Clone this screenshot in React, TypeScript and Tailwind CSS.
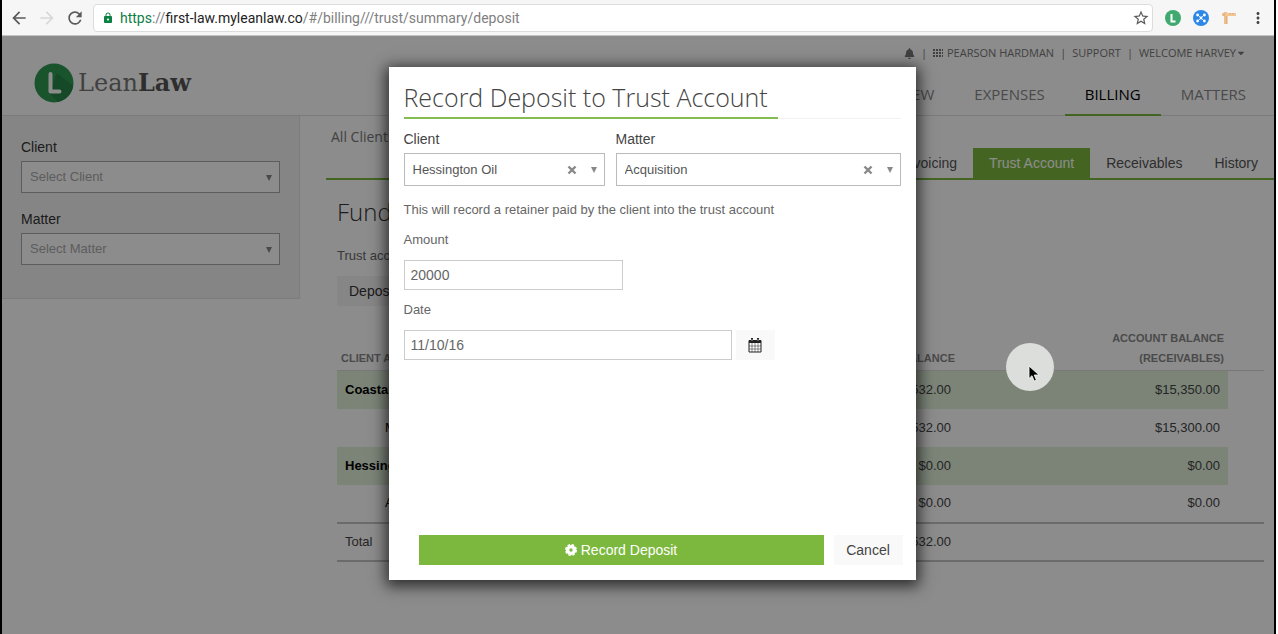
import { useState } from "react";
import { MdArrowBack, MdArrowForward, MdLock, MdMoreVert, MdRefresh, MdStarBorder } from "react-icons/md";
import { FaBell, FaCaretDown } from "react-icons/fa";

const sans = "font-['Liberation_Sans',Arial,sans-serif]";
const open = "font-['Open_Sans',sans-serif]";

const rows = [
  { name: "Coastal", balance: "$4,532.00", receivable: "$15,350.00", group: true },
  { name: "Merger", balance: "$4,532.00", receivable: "$15,300.00", group: false },
  { name: "Hessington Oil", balance: "$0.00", receivable: "$0.00", group: true },
  { name: "Acquisition", balance: "$0.00", receivable: "$0.00", group: false },
];

function BrowserBar() {
  return (
    <div className="flex h-9 items-center border-b border-[#c4c4c4] bg-[#f6f6f6] px-[7px] text-[#5a5a5a]">
      <button aria-label="Back" className="mr-2"><MdArrowBack size={20} /></button>
      <button aria-label="Forward" className="mr-2 text-[#d8d8d8]"><MdArrowForward size={20} /></button>
      <button aria-label="Reload" className="mr-2"><MdRefresh size={20} /></button>
      <div className="flex h-7 flex-1 items-center rounded-sm border border-[#dcdcdc] bg-white pr-0.5 pl-2 font-[Roboto,sans-serif] text-sm">
        <MdLock size={12} className="mr-1.5 text-[#0b8043]" />
        <span role="textbox" aria-label="Address" className="flex-1 text-[#808080]">
          <span className="text-[#0b8043]">https</span>://<span className="text-[#222]">first-law.myleanlaw.co</span>/#/billing///trust/summary/deposit
        </span>
        <button aria-label="Bookmark"><MdStarBorder size={18} /></button>
      </div>
      <div className="ml-3 flex items-center gap-3">
        <svg width="16" height="16" viewBox="0 0 16 16">
          <circle cx="8" cy="8" r="8" fill="#3fa96f" />
          <path d="M6.5 4v7.5h4" fill="none" stroke="#fff" strokeWidth="2" />
        </svg>
        <svg width="16" height="16" viewBox="0 0 16 16">
          <circle cx="8" cy="8" r="8" fill="#2b87e8" />
          <path d="M4 4l8 8M12 4l-8 8" stroke="#fff" strokeWidth="0.8" />
          <circle cx="8" cy="8" r="1.4" fill="#fff" />
          <circle cx="4.6" cy="5" r="1.4" fill="#fff" />
          <circle cx="11.4" cy="5" r="1.4" fill="#fff" />
          <circle cx="4.6" cy="11" r="1.4" fill="#fff" />
          <circle cx="11.4" cy="11" r="1.4" fill="#fff" />
        </svg>
        <svg width="16" height="16" viewBox="0 0 16 16">
          <path d="M3 2h3v12H3z" fill="#efbd8b" />
          <path d="M1 3h14v3H1z" fill="#f3c696" />
          <path d="M6 6v8M9 3v1.500M12 3v1.500M3 3v3" stroke="#d39a62" strokeWidth="0.8" />
        </svg>
        <button aria-label="Menu" className="text-[#444]"><MdMoreVert size={18} /></button>
      </div>
    </div>
  );
}

function Logo() {
  return (
    <a href="#home" className="flex items-center gap-1 pt-3.5 pl-8">
      <svg width="40" height="40" viewBox="0 0 40 40">
        <circle cx="20" cy="20" r="19.5" fill="#2e9a52" />
        <path d="M23 10l16 13a19.500 19.500 0 0 1-15 16l-9-9z" fill="#278647" />
        <path d="M16.500 11v17.500h9" fill="none" stroke="#fff" strokeWidth="4" strokeLinecap="round" strokeLinejoin="round" />
      </svg>
      <span className="font-['DejaVu_Serif',serif] text-2xl text-[#777]">
        Lean<span className="font-bold text-[#555]">Law</span>
      </span>
    </a>
  );
}

function Header() {
  return (
    <header className={`flex h-20 justify-between border-b border-[#e0e0e0] ${open}`}>
      <Logo />
      <div className="flex flex-col items-end justify-between pr-2">
        <div className="flex items-center gap-1.5 pt-[9px] pr-5 text-[11px] leading-4 text-[#777]">
          <FaBell size={11} />
          <span>|</span>
          <a href="#firm" className="flex items-center gap-1">
            <svg width="10" height="8" viewBox="0 0 10 8" fill="currentColor">
              <path d="M0 0h2v2H0zM3 0h2v2H3zM6 0h2v2H6zM9 0h1v2H9zM0 3h2v2H0zM3 3h2v2H3zM6 3h2v2H6zM9 3h1v2H9zM0 6h2v2H0zM3 6h2v2H3zM6 6h2v2H6zM9 6h1v2H9z" />
            </svg>
            PEARSON HARDMAN
          </a>
          <span>|</span>
          <a href="#support">SUPPORT</a>
          <span>|</span>
          <a href="#account" className="flex items-center">WELCOME HARVEY <FaCaretDown size={10} /></a>
        </div>
        <nav className="-mb-px flex text-[15px] leading-5 text-[#888]">
          <a href="#review" className="px-5 pb-2.5">REVIEW</a>
          <a href="#expenses" className="px-5 pb-2.5">EXPENSES</a>
          <a href="#billing" className="border-b-2 border-[#7cb83e] px-5 pb-2.5 text-black">BILLING</a>
          <a href="#matters" className="px-5 pb-2.5">MATTERS</a>
        </nav>
      </div>
    </header>
  );
}

function FilterSelect({ id, label, hint }: { id: string; label: string; hint: string }) {
  return (
    <div className="mb-4">
      <label htmlFor={id} className="mb-1 block text-sm leading-5 text-[#333]">{label}</label>
      <div className="relative">
        <select id={id} className="h-8 w-full appearance-none border border-[#aaa] bg-white px-2 text-[13px] text-[#aaa]">
          <option>{hint}</option>
        </select>
        <Arrow />
      </div>
    </div>
  );
}

function Arrow() {
  return (
    <svg width="6" height="6" viewBox="0 0 6 6" className="pointer-events-none absolute top-3.5 right-2 text-[#888]">
      <path d="M0 0h6L3 6z" fill="currentColor" />
    </svg>
  );
}

function Summary() {
  return (
    <main className="min-w-0 flex-1">
      <div className="flex h-16 justify-between border-b-2 border-[#7cb83e] text-sm text-[#555]">
        <span className={`pt-[11px] pl-[5px] text-[#777] ${open}`}>All Clients</span>
        <nav className="flex items-end">
          <a href="#invoicing" className="px-4 py-[3px] leading-6">Invoicing</a>
          <a href="#trust" className="bg-[#7cb83e] px-4 py-[3px] leading-6 text-white">Trust Account</a>
          <a href="#receivables" className="px-4 py-[3px] leading-6">Receivables</a>
          <a href="#history" className="px-4 py-[3px] leading-6">History</a>
        </nav>
      </div>
      <div className="pr-2.5 pl-[11px]">
        <h1 className={`pt-4 text-2xl font-light text-[#333] ${open}`}>Funds</h1>
        <p className="mt-4 text-[13px] leading-6 text-[#666]">Trust account</p>
        <button className="mt-2 h-[30px] bg-[#f5f5f5] px-3 text-sm text-[#333]">Deposit</button>
        <table className="mt-[22px] w-full table-fixed text-[13px] text-[#444]">
          <colgroup>
            <col />
            <col className="w-40" />
            <col className="w-[269px]" />
            <col className="w-9" />
          </colgroup>
          <thead>
            <tr className="border-b border-[#ddd] align-bottom text-[11px] leading-5 text-[#888]">
              <th className="px-1 pb-0.5 text-left">CLIENT ACCOUNT</th>
              <th className="px-1 pb-0.5 text-right">BALANCE</th>
              <th className="px-1 pb-0.5 text-right">ACCOUNT BALANCE<br />(RECEIVABLES)</th>
              <th></th>
            </tr>
          </thead>
          <tbody>
            {rows.map((row) => (
              <tr key={row.name} className="h-[38px]">
                <td className={row.group ? "bg-[#e2f1db] px-2 font-bold text-black" : "pl-12 text-black"}>{row.name}</td>
                <td className={row.group ? "bg-[#e2f1db] px-2 text-right" : "px-2 text-right"}>{row.balance}</td>
                <td className={row.group ? "bg-[#e2f1db] px-2 text-right" : "px-2 text-right"}>{row.receivable}</td>
                <td></td>
              </tr>
            ))}
          </tbody>
          <tfoot>
            <tr className="h-[38px] border-y-2 border-[#c4c4c4]">
              <td className="px-2">Total</td>
              <td className="px-2 text-right">$4,532.00</td>
              <td></td>
              <td></td>
            </tr>
          </tfoot>
        </table>
      </div>
    </main>
  );
}

function ModalSelect({ id, label, value, className }: { id: string; label: string; value: string; className: string }) {
  return (
    <div className={className}>
      <label htmlFor={id} className="mb-1 block text-sm leading-5 text-[#444]">{label}</label>
      <div className="relative">
        <select id={id} className="h-[33px] w-full appearance-none border border-[#bbb] bg-white px-2 text-[13px] text-[#555]">
          <option>{value}</option>
        </select>
        <button type="button" aria-label={`Clear ${label}`} className="absolute top-3 right-7 text-[#888]">
          <svg width="10" height="10" viewBox="0 0 10 10">
            <path d="M1.500 1.500l7 7M8.500 1.500l-7 7" stroke="currentColor" strokeWidth="2.400" />
          </svg>
        </button>
        <Arrow />
      </div>
    </div>
  );
}

function DepositModal() {
  const [amount, setAmount] = useState("20000");
  const [date, setDate] = useState("11/10/16");

  return (
    <form role="dialog" aria-labelledby="deposit-title" className="flex min-h-[513px] w-[527px] flex-col bg-white px-[15px] pt-3 pb-[15px] text-[#555] shadow-[0_3px_14px_3px_rgba(0,0,0,0.7)]">
      <div className="flex border-b border-[#f2f2f2]">
        <h2 id="deposit-title" className={`-mb-px border-b-2 border-[#85bd55] pr-2.5 pb-0.5 text-[25px] leading-9 font-light text-[#444] ${open}`}>
          Record Deposit to Trust Account
        </h2>
      </div>
      <div className="mt-2.5 flex gap-[11px]">
        <ModalSelect id="client" label="Client" value="Hessington Oil" className="w-[201px]" />
        <ModalSelect id="matter" label="Matter" value="Acquisition" className="flex-1" />
      </div>
      <p className="mt-3.5 text-[13px] leading-5 text-[#666]">This will record a retainer paid by the client into the trust account</p>
      <label htmlFor="amount" className="mt-2.5 text-[13px] leading-5 text-[#666]">Amount</label>
      <input id="amount" value={amount} onChange={(e) => setAmount(e.target.value)} className="mt-2.5 h-[30px] w-[219px] border border-[#ccc] px-1.5 text-sm text-[#666]" />
      <label htmlFor="date" className="mt-2.5 text-[13px] leading-5 text-[#666]">Date</label>
      <div className="mt-2.5 flex gap-1">
        <input id="date" value={date} onChange={(e) => setDate(e.target.value)} className="h-[30px] w-[328px] border border-[#ccc] px-1.5 text-sm text-[#666]" />
        <button type="button" aria-label="Open calendar" className="flex w-[39px] items-center justify-center bg-[#f9f9f9] text-[#222]">
          <svg width="14" height="15" viewBox="0 0 14 15">
            <path d="M1 2.500h12V14H1z" fill="#fff" stroke="currentColor" />
            <path d="M1 2h12v3H1z" fill="currentColor" />
            <path d="M4 0v4M10 0v4" stroke="currentColor" strokeWidth="2" />
            <path d="M4 1v2M10 1v2" stroke="#fff" strokeWidth="0.600" />
            <path d="M4 5v9M7 5v9M10 5v9M1 8h12M1 11h12" stroke="currentColor" strokeWidth="0.500" />
          </svg>
        </button>
      </div>
      <div className="-mr-0.5 mt-auto flex gap-2.5 pl-[15px]">
        <button type="button" className="flex h-[30px] flex-1 items-center justify-center gap-1 bg-[#7cb83e] text-sm text-white">
          <svg width="12" height="12" viewBox="0 0 12 12">
            <circle cx="6" cy="6" r="3.400" fill="none" stroke="currentColor" strokeWidth="3.400" />
            <circle cx="6" cy="6" r="5.300" fill="none" stroke="currentColor" strokeWidth="1.400" strokeDasharray="2.600 1.560" />
          </svg>
          Record Deposit
        </button>
        <button type="button" className="h-[30px] w-[69px] bg-[#f9f9f9] text-sm text-[#444]">Cancel</button>
      </div>
    </form>
  );
}

function Pointer() {
  return (
    <div className="pointer-events-none absolute top-[307px] left-[1004px] h-12 w-12 rounded-full bg-[#dcdedb]">
      <svg width="12" height="18" viewBox="0 0 12 18" className="absolute top-[22px] left-[22px]">
        <path d="M1 1v12.500l3-2.800 2.200 5.300 2.200-1-2.200-5H11z" fill="#000" stroke="#fff" strokeWidth="0.800" />
      </svg>
    </div>
  );
}

export default function App() {
  return (
    <div className={`flex min-h-screen bg-white pr-0.5 ${sans}`}>
      <div className="flex min-w-0 flex-1 flex-col border-x-2 border-black">
        <BrowserBar />
        <div className="relative flex-1">
          <Header />
          <div className="flex items-start">
            <aside className="mr-[26px] w-[298px] border-r border-b border-[#e2e2e2] bg-[#f3f3f3] px-[19px] pt-[21px] pb-[17px]">
              <FilterSelect id="filter-client" label="Client" hint="Select Client" />
              <FilterSelect id="filter-matter" label="Matter" hint="Select Matter" />
            </aside>
            <Summary />
          </div>
          <div className="absolute inset-0 flex items-start justify-center bg-black/45 pt-[31px] pl-7">
            <DepositModal />
          </div>
          <Pointer />
        </div>
      </div>
    </div>
  );
}
